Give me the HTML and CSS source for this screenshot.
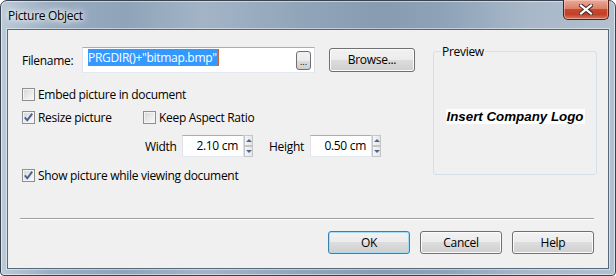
FILE: index.html
```html
<!DOCTYPE html>
<html lang="en">
<head>
    <meta charset="UTF-8">
    <title>Picture Object</title>
    <link rel="stylesheet" href="styles.css">
</head>
<body>
    <div class="window">
        <div class="titlebar">
            <span class="title">Picture Object</span>
            <div class="close-btn">
                <svg width="14" height="11" viewBox="0 0 14 11">
                    <path d="M2 1.5 L12 9.5 M12 1.5 L2 9.5" stroke="#4a2a24" stroke-width="4.2" stroke-linecap="square"/>
                    <path d="M2 1.5 L12 9.5 M12 1.5 L2 9.5" stroke="#ffffff" stroke-width="2.2" stroke-linecap="square"/>
                </svg>
            </div>
        </div>
        <div class="client">
            <div class="top">
                <div class="form">
                    <div class="file-row">
                        <span class="file-label">Filename:</span>
                        <div class="textbox file-box">
                            <span class="sel">PRGDIR()+"bitmap.bmp"</span><span class="caret"></span>
                            <span class="dots-btn">...</span>
                        </div>
                        <div class="btn browse">Browse...</div>
                    </div>
                    <div class="check-row embed-row">
                        <span class="check"></span>Embed picture in document
                    </div>
                    <div class="check-row resize-row">
                        <div class="check-item resize-item">
                            <span class="check"><svg width="11" height="11" viewBox="0 0 11 11"><path d="M1.8 5.4 L4.3 8.3 L9.2 1.6" fill="none" stroke="#4a5f8f" stroke-width="1.9"/></svg></span>Resize picture
                        </div>
                        <div class="check-item">
                            <span class="check"></span>Keep Aspect Ratio
                        </div>
                    </div>
                    <div class="size-row">
                        <span class="w-label">Width</span>
                        <div class="textbox spin-box">2.10 cm</div>
                        <div class="spinner"><span class="up"></span><span class="down"></span></div>
                        <span class="h-label">Height</span>
                        <div class="textbox spin-box">0.50 cm</div>
                        <div class="spinner"><span class="up"></span><span class="down"></span></div>
                    </div>
                    <div class="check-row show-row">
                        <span class="check"><svg width="11" height="11" viewBox="0 0 11 11"><path d="M1.8 5.4 L4.3 8.3 L9.2 1.6" fill="none" stroke="#4a5f8f" stroke-width="1.9"/></svg></span>Show picture while viewing document
                    </div>
                </div>
                <fieldset class="preview">
                    <legend>Preview</legend>
                    <div class="logo-wrap"><span class="logo">Insert Company Logo</span></div>
                </fieldset>
            </div>
            <div class="separator"></div>
            <div class="footer">
                <div class="btn default">OK</div>
                <div class="btn">Cancel</div>
                <div class="btn">Help</div>
            </div>
        </div>
    </div>
</body>
</html>
```

FILE: styles.css
```css
body {
    margin: 0;
    padding: 0;
    background: #ffffff;
    font-family: "Open Sans", "Noto Sans", sans-serif;
    font-size: 12px;
    letter-spacing: -0.3px;
    color: #000;
}

.window {
    width: 616px;
    height: 276px;
    box-sizing: border-box;
    padding: 0 6px 6px 6px;
    border: 1px solid #38434f;
    border-radius: 7px 7px 4px 4px;
    background: linear-gradient(90deg, #bccad8 0%, #9aaec2 8%, #8fa4b9 20%, #a3b4c6 33%, #92a6ba 48%, #879cb1 62%, #8ea3b8 72%, #a8b8c8 86%, #b2c0cf 100%);
    box-shadow: inset 0 0 0 1px rgba(255, 255, 255, 0.5);
}

.titlebar {
    height: 28px;
    display: flex;
    align-items: center;
    padding-left: 1px;
}

.title {
    text-shadow: 0 0 8px #ffffff, 0 0 12px #ffffff, 0 0 4px #ffffff;
}

.close-btn {
    margin-left: auto;
    align-self: flex-start;
    margin-top: -1px;
    width: 44px;
    height: 19px;
    border: 1px solid #4f1f18;
    border-top: none;
    border-radius: 0 0 5px 5px;
    background: linear-gradient(#e9a99a 0%, #dd8068 45%, #c84a2f 50%, #c13f26 75%, #d67a5f 100%);
    box-shadow: inset 0 0 0 1px rgba(255, 210, 200, 0.5);
    display: flex;
    align-items: center;
    justify-content: center;
}

.client {
    height: 240px;
    box-sizing: border-box;
    border: 1px solid #56687b;
    background: #f0f0f0;
    box-shadow: 0 0 0 1px rgba(255, 255, 255, 0.45);
}

.top {
    display: flex;
    height: 188px;
    box-sizing: border-box;
    padding: 14px 11px 0 14px;
}

.form {
    flex: 1;
    padding-top: 3px;
}

.file-row {
    display: flex;
    align-items: center;
    height: 26px;
}

.file-label {
    width: 60px;
}

.textbox {
    box-sizing: border-box;
    background: #ffffff;
    border: 1px solid;
    border-color: #abadb3 #dbdfe6 #e3e9ef #e2e3ea;
}

.file-box {
    width: 233px;
    height: 26px;
    display: flex;
    align-items: flex-start;
    padding: 1px 3px 0 5px;
}

.sel {
    background: #3399ff;
    color: #ffffff;
    line-height: 17px;
    height: 17px;
    padding-right: 1px;
}

.caret {
    width: 1px;
    height: 17px;
    background: #cc6633;
}

.dots-btn {
    margin-left: auto;
    align-self: center;
    width: 15px;
    height: 19px;
    box-sizing: border-box;
    border: 1px solid #707070;
    border-radius: 3px;
    background: linear-gradient(#f2f2f2 0%, #ebebeb 50%, #dddddd 50%, #cfcfcf 100%);
    font-size: 9px;
    line-height: 20px;
    letter-spacing: 0;
    text-align: center;
    overflow: hidden;
}

.btn {
    box-sizing: border-box;
    width: 82px;
    height: 23px;
    border: 1px solid #707070;
    border-radius: 3px;
    background: linear-gradient(#f2f2f2 0%, #ebebeb 50%, #dddddd 50%, #cfcfcf 100%);
    box-shadow: inset 0 0 0 1px #fbfbfb;
    text-align: center;
    line-height: 21px;
}

.browse {
    margin-left: 14px;
    width: 86px;
    height: 24px;
    line-height: 22px;
}

.btn.default {
    border-color: #3c7fb1;
    box-shadow: inset 0 0 0 1px #a6dbf5;
}

.check-row {
    display: flex;
    align-items: center;
    height: 18px;
}

.embed-row {
    margin-top: 12px;
}

.resize-row {
    margin-top: 5px;
}

.show-row {
    margin-top: 9px;
}

.check-item {
    display: flex;
    align-items: center;
}

.resize-item {
    width: 121px;
}

.check {
    box-sizing: border-box;
    width: 13px;
    height: 13px;
    margin-right: 3px;
    border: 1px solid #8e8f8f;
    background: linear-gradient(135deg, #d2d4d7 0%, #e8e9ea 50%, #fbfbfb 100%);
    box-shadow: inset 0 0 0 1px #f4f4f4;
    display: flex;
    align-items: center;
    justify-content: center;
}

.size-row {
    display: flex;
    align-items: center;
    height: 22px;
    margin-top: 9px;
    padding-left: 123px;
}

.w-label {
    width: 37px;
}

.h-label {
    width: 41px;
    margin-left: 16px;
}

.spin-box {
    width: 62px;
    height: 22px;
    text-align: right;
    padding-right: 5px;
    line-height: 20px;
}

.spinner {
    width: 9px;
    height: 22px;
    display: flex;
    flex-direction: column;
}

.spinner span {
    flex: 1;
    box-sizing: border-box;
    border: 1px solid #c3c5c8;
    background: linear-gradient(90deg, #f6f6f6, #e6e6e6);
    display: flex;
    align-items: center;
    justify-content: center;
}

.spinner .up::after {
    content: "";
    border-left: 3px solid transparent;
    border-right: 3px solid transparent;
    border-bottom: 3px solid #4d6794;
}

.spinner .down::after {
    content: "";
    border-left: 3px solid transparent;
    border-right: 3px solid transparent;
    border-top: 3px solid #4d6794;
}

.preview {
    width: 164px;
    height: 131px;
    box-sizing: border-box;
    margin: 0;
    padding: 0;
    border: 1px solid #d5dfe5;
    border-radius: 3px;
    min-width: 0;
}

.preview legend {
    margin-left: 7px;
    padding: 0 1px;
    line-height: 15px;
}

.logo-wrap {
    text-align: center;
    padding-top: 49px;
}

.logo {
    font-family: "Liberation Sans", Arial, sans-serif;
    font-weight: bold;
    font-style: italic;
    font-size: 13.33px;
    line-height: 15px;
    letter-spacing: 0;
    background: #ffffff;
    padding: 0 1px;
}

.separator {
    height: 1px;
    margin: 0 14px 0 12px;
    background: #a0a0a0;
    border-bottom: 1px solid #ffffff;
}

.footer {
    display: flex;
    justify-content: flex-end;
    gap: 10px;
    padding: 11px 14px 0 0;
}
```
